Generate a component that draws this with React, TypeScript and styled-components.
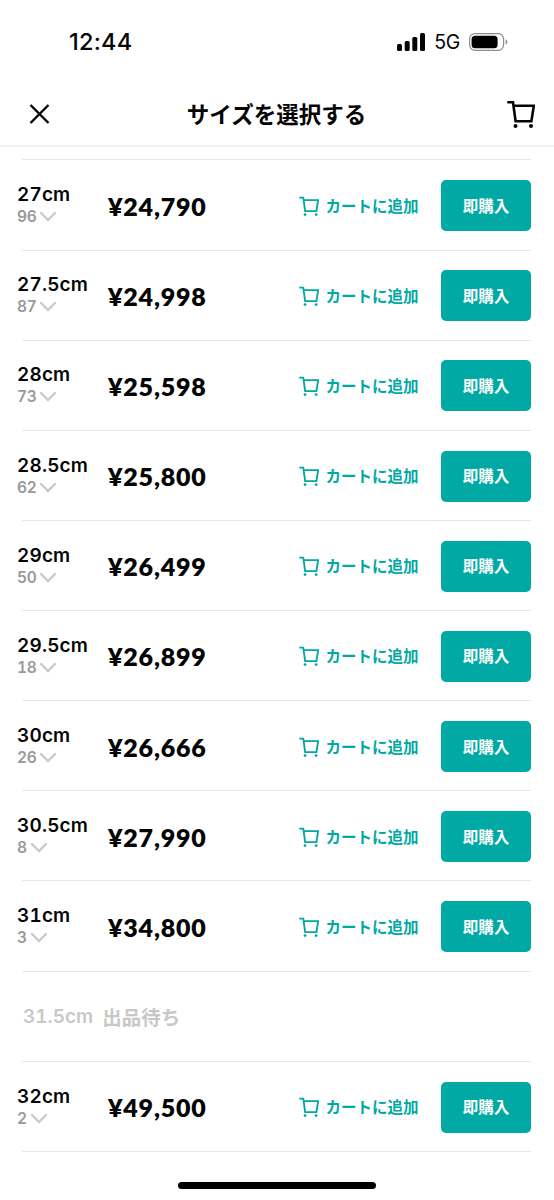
import React from "react";
import styled, { createGlobalStyle } from "styled-components";

const teal = "#00a9a3";
const jp = '"Noto Sans CJK JP", sans-serif';

const GlobalStyle = createGlobalStyle`
  * { box-sizing: border-box; }
  html, body { margin: 0; padding: 0; background: #fff; }
  body { font-family: Inter, ${jp}; color: #050505; }
  button { font: inherit; border: 0; padding: 0; background: none; cursor: pointer; }
`;

const Screen = styled.main`
  width: 554px;
  height: 1200px;
  display: flex;
  flex-direction: column;
  overflow: hidden;
  background: #fff;
`;

const StatusBar = styled.div`
  height: 83px;
  flex: none;
  display: flex;
  justify-content: space-between;
  align-items: center;
  padding: 0 46px 0 69px;
`;

const Clock = styled.time`
  font: 500 23.5px/30px Inter, sans-serif;
  letter-spacing: 0.25px;
`;

const StatusIcons = styled.div`
  display: flex;
  align-items: center;
`;

const Network = styled.span`
  font: 400 19.5px/24px Inter, sans-serif;
  letter-spacing: -0.3px;
  margin: 1px 9px 0 9px;
`;

const Header = styled.header`
  height: 62px;
  flex: none;
  display: grid;
  grid-template-columns: 60px 1fr 60px;
  align-items: center;
  padding: 0 19px 0 18px;
  box-shadow: 0 2px 0 #f0f0f0;
`;

const Title = styled.h1`
  margin: -3px 0 0;
  text-align: center;
  font: 700 22.5px/32px ${jp};
`;

const IconButton = styled.button<{ $end?: boolean }>`
  display: flex;
  justify-content: ${(p) => (p.$end ? "flex-end" : "flex-start")};
  color: #050505;
`;

const List = styled.ul`
  list-style: none;
  margin: 14px 0 0;
  padding: 0 23px 0 22px;
  flex: 1;
`;

const Row = styled.li`
  height: 90.15px;
  display: flex;
  align-items: center;
  padding-top: 1.5px;
  border-bottom: 1.5px solid #e6e6e6;

  &:first-child {
    height: 91.5px;
    border-top: 1.5px solid #e6e6e6;
  }
`;

const SizeCell = styled.div`
  width: 91px;
  margin-left: -5px;
  flex: none;
`;

const SizeName = styled.div`
  font: 600 19px/23px Inter, sans-serif;
  font-variant-numeric: tabular-nums;
  letter-spacing: 0.15px;
  white-space: nowrap;
`;

const Stock = styled.div`
  display: flex;
  align-items: center;
  gap: 4px;
  height: 22px;
  font: 600 15.5px/22px Inter, sans-serif;
  font-variant-numeric: tabular-nums;
  letter-spacing: -0.4px;
  color: #999;
`;

const Price = styled.div`
  flex: 1;
  font: 800 25px/30px Lato, sans-serif;
  letter-spacing: 0.8px;
`;

const AddToCart = styled.button`
  display: flex;
  align-items: center;
  gap: 6px;
  margin-right: 22.5px;
  color: ${teal};
  font: 700 15.5px/24px ${jp};
`;

const AddLabel = styled.span`
  margin-top: -2px;
`;

const BuyNow = styled.button`
  width: 90px;
  height: 51px;
  flex: none;
  padding-bottom: 2px;
  border-radius: 5px;
  background: ${teal};
  color: #fff;
  font: 700 15.5px/24px ${jp};
`;

const Waiting = styled.div`
  display: flex;
  gap: 9px;
  align-items: center;
  padding-left: 1px;
  color: #c8c8c8;
  font: 700 19.5px/28px ${jp};
`;

const WaitingSize = styled.span`
  font: 600 19px/28px Inter, sans-serif;
  font-variant-numeric: tabular-nums;
`;

const HomeArea = styled.footer`
  height: 20px;
  flex: none;
  display: flex;
  justify-content: center;
`;

const HomeIndicator = styled.div`
  width: 198px;
  height: 7px;
  margin-top: 1.5px;
  border-radius: 4px;
  background: #000;
`;

function CartIcon({ size, stroke = 2 }: { size: number; stroke?: number }) {
  return (
    <svg width={size} height={size} viewBox="0 0 28 28" fill="none" stroke="currentColor" strokeWidth={stroke}>
      <path d="M0.3 2.2H6L8.6 21.2H24.4L26.8 5.8H6.5" />
      <circle cx="8.5" cy="26" r="2" fill="currentColor" stroke="none" />
      <circle cx="24" cy="26" r="2" fill="currentColor" stroke="none" />
    </svg>
  );
}

function Chevron() {
  return (
    <svg width="16" height="10" viewBox="0 0 16 10" fill="none" stroke="#cacaca" strokeWidth="2.4">
      <path d="M1 1L8 8L15 1" strokeLinecap="round" />
    </svg>
  );
}

function SignalIcon() {
  return (
    <svg width="28" height="18" viewBox="0 0 28 18" fill="currentColor">
      <rect x="0" y="11" width="5" height="7" rx="1.5" />
      <rect x="7.7" y="8" width="5" height="10" rx="1.5" />
      <rect x="15.3" y="4" width="5" height="14" rx="1.5" />
      <rect x="23" y="0" width="5" height="18" rx="1.5" />
    </svg>
  );
}

function BatteryIcon() {
  return (
    <svg width="39" height="18" viewBox="0 0 39 18">
      <rect x="0.6" y="0.6" width="34" height="16.8" rx="5.4" fill="none" stroke="#8c8c8c" strokeWidth="1.2" />
      <rect x="2.6" y="2.7" width="26" height="12.6" rx="3.6" fill="#000" />
      <path d="M36.6 6.2Q38.4 7.2 38.4 9T36.6 11.8Z" fill="#8c8c8c" />
    </svg>
  );
}

interface Item {
  size: string;
  stock?: number;
  price?: string;
}

const items: Item[] = [
  { size: "27cm", stock: 96, price: "¥24,790" },
  { size: "27.5cm", stock: 87, price: "¥24,998" },
  { size: "28cm", stock: 73, price: "¥25,598" },
  { size: "28.5cm", stock: 62, price: "¥25,800" },
  { size: "29cm", stock: 50, price: "¥26,499" },
  { size: "29.5cm", stock: 18, price: "¥26,899" },
  { size: "30cm", stock: 26, price: "¥26,666" },
  { size: "30.5cm", stock: 8, price: "¥27,990" },
  { size: "31cm", stock: 3, price: "¥34,800" },
  { size: "31.5cm" },
  { size: "32cm", stock: 2, price: "¥49,500" },
];

function SizeRow({ item }: { item: Item }) {
  if (!item.price) {
    return (
      <Row>
        <Waiting>
          <WaitingSize>{item.size}</WaitingSize>
          出品待ち
        </Waiting>
      </Row>
    );
  }
  return (
    <Row>
      <SizeCell>
        <SizeName>{item.size}</SizeName>
        <Stock>
          {item.stock}
          <Chevron />
        </Stock>
      </SizeCell>
      <Price>{item.price}</Price>
      <AddToCart>
        <CartIcon size={20} stroke={2.6} />
        <AddLabel>カートに追加</AddLabel>
      </AddToCart>
      <BuyNow>即購入</BuyNow>
    </Row>
  );
}

export default function App() {
  return (
    <Screen>
      <GlobalStyle />
      <StatusBar>
        <Clock>12:44</Clock>
        <StatusIcons>
          <SignalIcon />
          <Network>5G</Network>
          <BatteryIcon />
        </StatusIcons>
      </StatusBar>
      <Header>
        <IconButton aria-label="閉じる">
          <svg width="42" height="20" viewBox="0 0 42 20" fill="none" stroke="currentColor" strokeWidth="2.4">
            <path d="M12.5 1L30.5 19M30.5 1L12.5 19" />
          </svg>
        </IconButton>
        <Title>サイズを選択する</Title>
        <IconButton $end aria-label="カート">
          <CartIcon size={28} stroke={2.6} />
        </IconButton>
      </Header>
      <List>
        {items.map((item) => (
          <SizeRow key={item.size} item={item} />
        ))}
      </List>
      <HomeArea>
        <HomeIndicator />
      </HomeArea>
    </Screen>
  );
}
